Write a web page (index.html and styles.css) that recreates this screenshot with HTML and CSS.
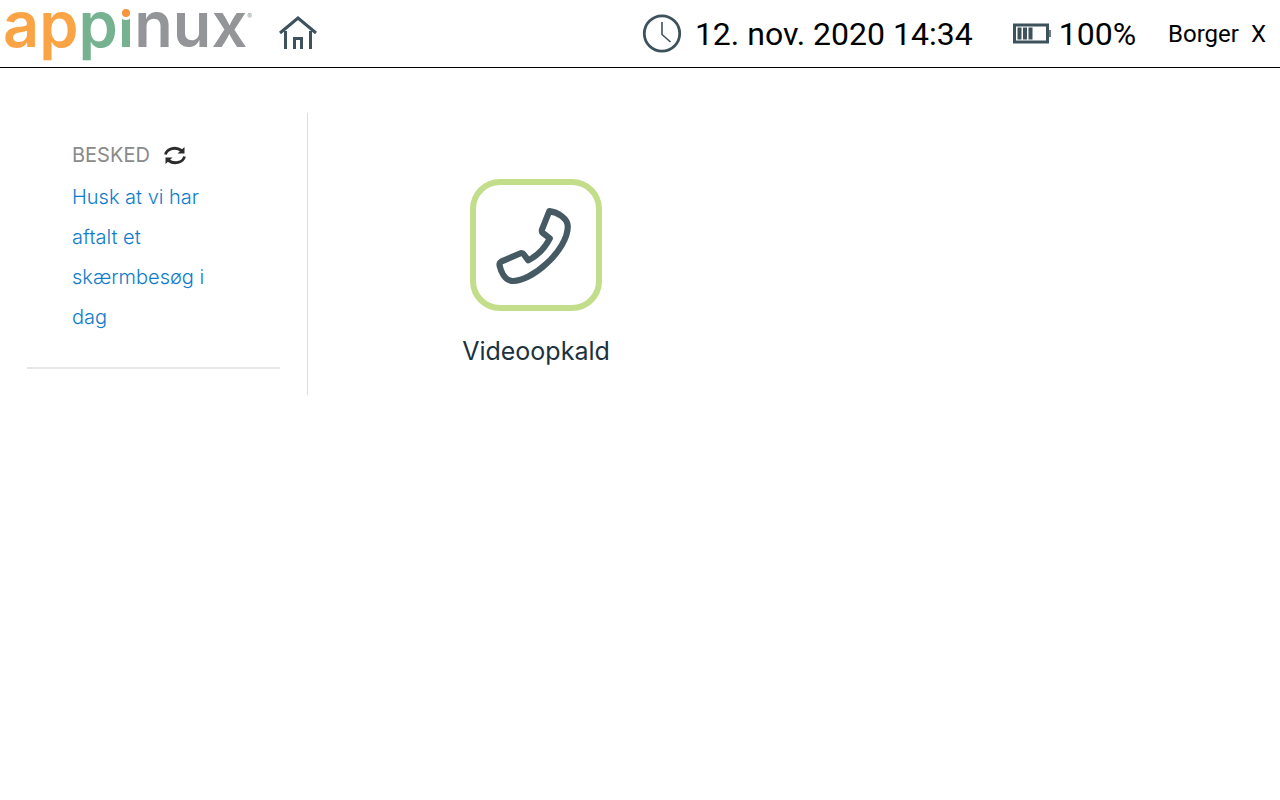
FILE: index.html
```html
<!DOCTYPE html>
<html lang="da">
<head>
  <meta charset="UTF-8" />
  <meta name="viewport" content="width=device-width, initial-scale=1.0"/>
  <title>Appinux</title>
  <link rel="stylesheet" href="styles.css">
</head>
<body>
  <header class="topbar">
    <a class="logo" href="#"><span class="orange">ap</span><span class="green">p<span class="dotless">ı<span class="dot"></span></span></span><span class="grey">nux</span><sup>®</sup></a>
    <a class="home" href="#" aria-label="Hjem">
      <svg width="38" height="36" viewBox="0 0 38 36" fill="none" stroke="#3d525d" stroke-width="3">
        <path d="M1 17 19 2l18 15"/>
        <path d="M6.500 15v18M31.500 15v18"/>
        <path d="M15.500 33V22.500h7V33"/>
      </svg>
    </a>

    <div class="clock">
      <svg width="40" height="40" viewBox="0 0 40 40" fill="none" stroke="#3d525d">
        <circle cx="20" cy="19.500" r="17.700" stroke-width="2.800"/>
        <path d="M20 8v12.500l8.500 7.500" stroke-width="1.600"/>
      </svg>
      <time datetime="2020-11-12T14:34">12. nov. 2020 14:34</time>
    </div>

    <div class="battery">
      <svg width="38" height="22" viewBox="0 0 38 22">
        <rect x="1.500" y="2" width="33" height="17" fill="none" stroke="#3d525d" stroke-width="3"/>
        <path d="M4.500 4.500h4v12h-4zM10 4.500h4v12h-4zM15.500 4.500h4v12h-4z" fill="#3d525d"/>
        <path d="M37 7v7" stroke="#3d525d" stroke-width="1.500"/>
      </svg>
      <span>100%</span>
    </div>

    <div class="user">
      <span>Borger</span>
      <button type="button" class="logout" aria-label="Log ud">X</button>
    </div>
  </header>

  <main class="page">
    <aside class="sidebar">
      <section class="message">
        <div class="message-head">
          <h2>BESKED</h2>
          <button type="button" class="refresh" aria-label="Opdater">
            <svg width="22" height="20" viewBox="0 0 22 20">
              <path d="M1.500 9.500C3 3 12 1.500 17.500 5.500M20.500 11.500C19 18 10 19.500 4.500 15.500" fill="none" stroke="#2b2b2b" stroke-width="2.800"/>
              <path d="M20.500 2v6.500h-7zM1.500 19v-6.500h7z" fill="#2b2b2b"/>
            </svg>
          </button>
        </div>
        <a class="message-text" href="#">Husk at vi har aftalt et skærmbesøg i dag</a>
      </section>
    </aside>

    <section class="apps">
      <a class="app" href="#">
        <span class="app-icon">
          <svg width="80" height="80" viewBox="2 2 78 78" fill="none" stroke="#465a64" stroke-width="6" stroke-linejoin="round">
            <path d="M54 8C62 9 72 15 72 23 72 46 36 78 17 76 11 75 7 68 5.500 61Q5 58.500 7.500 57L26 49q2-.5 3 1l4.500 6Q47 49 54.500 34.500L48 29.500q-2-1.500-1-4z"/>
          </svg>
        </span>
        <span class="app-name">Videoopkald</span>
      </a>
    </section>
  </main>
</body>
</html>
```

FILE: styles.css
```css
* {
  box-sizing: border-box;
}
body {
  margin: 0;
  background: #fff;
  font-family: Roboto, sans-serif;
  color: #000;
}
a {
  text-decoration: none;
}
button {
  padding: 0;
  border: 0;
  background: none;
  font: inherit;
  color: inherit;
  cursor: pointer;
}
svg {
  display: block;
}

/* top bar */
.topbar {
  display: flex;
  align-items: center;
  height: 68px;
  padding: 0 14px 0 3px;
  border-bottom: 1px solid #000;
}
.logo {
  display: flex;
  align-self: flex-start;
  font-family: Inter, sans-serif;
  font-size: 63px;
  font-weight: 600;
  line-height: 48px;
}
.orange {
  color: #fba445;
}
.green {
  color: #76b290;
}
.grey {
  color: #939598;
}
.dotless {
  position: relative;
}
/* the white ring keeps the dot clear of the stem */
.dot {
  position: absolute;
  top: 23px;
  left: 50%;
  width: 8px;
  height: 8px;
  margin-left: -4px;
  border-radius: 50%;
  background: #f7943c;
  box-shadow: 0 0 0 3px #fff;
}
.logo sup {
  color: #939598;
  font-size: 7px;
  font-weight: 400;
  line-height: 34px;
}
.home {
  margin-left: 27px;
}
.clock {
  display: flex;
  align-items: center;
  gap: 13px;
  margin-left: auto;
  font-size: 32px;
}
.battery {
  display: flex;
  align-items: center;
  gap: 8px;
  margin-left: 40px;
  font-size: 32px;
}
.user {
  display: flex;
  gap: 12px;
  margin-left: 32px;
  font-size: 24px;
}

/* content */
.page {
  display: grid;
  grid-template-columns: 24% 1fr;
  align-items: start;
  padding-top: 45px;
}
.sidebar {
  margin-right: -1px;
  padding: 0 27px 26px;
  border-right: 1px solid #ddd;
}
.message {
  padding: 22px 44px 30px 45px;
  border-bottom: 2px solid #e6e6e6;
  font-family: Inter, sans-serif;
  font-size: 20px;
  font-weight: 300;
  line-height: 40px;
}
.message-head {
  display: flex;
  align-items: center;
  gap: 14px;
  margin-bottom: 2px;
}
.message h2 {
  margin: 0;
  color: #8a8a8a;
  font-size: 20px;
  font-weight: 400;
}
.message-text {
  display: block;
  color: #0f7ccb;
}
.apps {
  display: flex;
  flex-wrap: wrap;
  align-items: flex-start;
  padding: 66px 155px;
}
.app {
  display: flex;
  flex-direction: column;
  align-items: center;
  gap: 24px;
  color: #1c3240;
  font-family: Inter, sans-serif;
  font-size: 25px;
  line-height: 32px;
}
.app-icon {
  display: grid;
  place-items: center;
  width: 132px;
  height: 132px;
  border: 6px solid #c2de8b;
  border-radius: 30px;
}
```
